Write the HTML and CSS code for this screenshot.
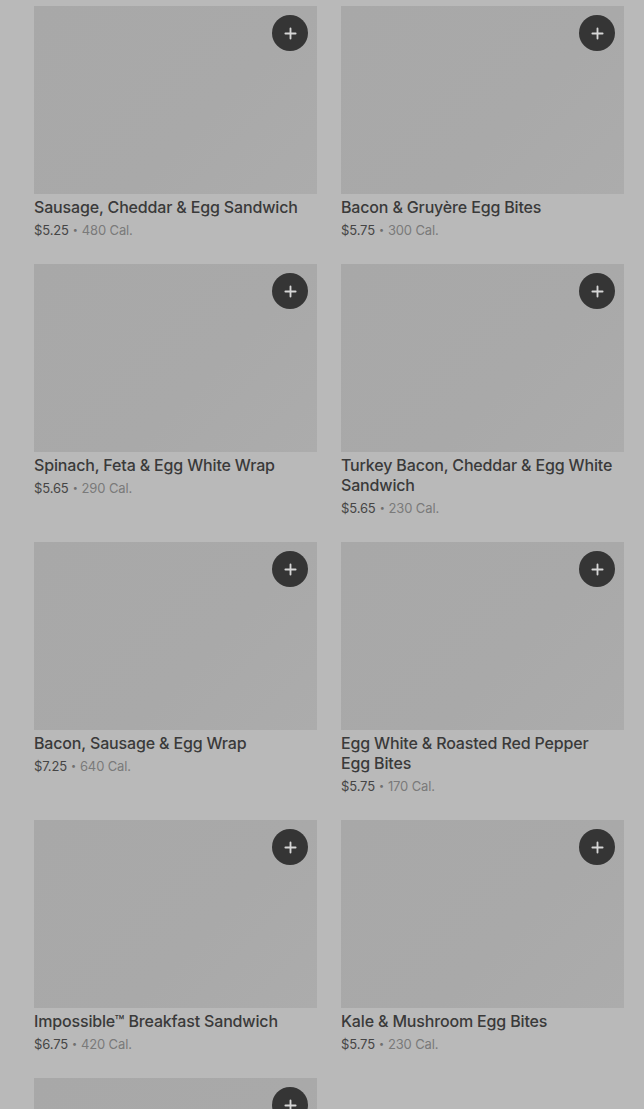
FILE: index.html
```html
<!DOCTYPE html>
<html>
<head>
<meta charset="utf-8">
<link rel="stylesheet" href="styles.css">
</head>
<body>
<div class="grid">
  <div class="card">
    <div class="img"><button class="add"><svg viewBox="0 0 14 14" width="13" height="13"><path d="M7 1.5v11M1.5 7h11" stroke="#d6d6d6" stroke-width="2" stroke-linecap="round"/></svg></button></div>
    <div class="title">Sausage, Cheddar &amp; Egg Sandwich</div>
    <div class="meta"><span class="price">$5.25</span><span class="dot">•</span><span class="cal">480 Cal.</span></div>
  </div>
  <div class="card">
    <div class="img"><button class="add"><svg viewBox="0 0 14 14" width="13" height="13"><path d="M7 1.5v11M1.5 7h11" stroke="#d6d6d6" stroke-width="2" stroke-linecap="round"/></svg></button></div>
    <div class="title">Bacon &amp; Gruyère Egg Bites</div>
    <div class="meta"><span class="price">$5.75</span><span class="dot">•</span><span class="cal">300 Cal.</span></div>
  </div>
  <div class="card">
    <div class="img"><button class="add"><svg viewBox="0 0 14 14" width="13" height="13"><path d="M7 1.5v11M1.5 7h11" stroke="#d6d6d6" stroke-width="2" stroke-linecap="round"/></svg></button></div>
    <div class="title">Spinach, Feta &amp; Egg White Wrap</div>
    <div class="meta"><span class="price">$5.65</span><span class="dot">•</span><span class="cal">290 Cal.</span></div>
  </div>
  <div class="card">
    <div class="img"><button class="add"><svg viewBox="0 0 14 14" width="13" height="13"><path d="M7 1.5v11M1.5 7h11" stroke="#d6d6d6" stroke-width="2" stroke-linecap="round"/></svg></button></div>
    <div class="title">Turkey Bacon, Cheddar &amp; Egg White Sandwich</div>
    <div class="meta"><span class="price">$5.65</span><span class="dot">•</span><span class="cal">230 Cal.</span></div>
  </div>
  <div class="card">
    <div class="img"><button class="add"><svg viewBox="0 0 14 14" width="13" height="13"><path d="M7 1.5v11M1.5 7h11" stroke="#d6d6d6" stroke-width="2" stroke-linecap="round"/></svg></button></div>
    <div class="title">Bacon, Sausage &amp; Egg Wrap</div>
    <div class="meta"><span class="price">$7.25</span><span class="dot">•</span><span class="cal">640 Cal.</span></div>
  </div>
  <div class="card">
    <div class="img"><button class="add"><svg viewBox="0 0 14 14" width="13" height="13"><path d="M7 1.5v11M1.5 7h11" stroke="#d6d6d6" stroke-width="2" stroke-linecap="round"/></svg></button></div>
    <div class="title">Egg White &amp; Roasted Red Pepper Egg Bites</div>
    <div class="meta"><span class="price">$5.75</span><span class="dot">•</span><span class="cal">170 Cal.</span></div>
  </div>
  <div class="card">
    <div class="img"><button class="add"><svg viewBox="0 0 14 14" width="13" height="13"><path d="M7 1.5v11M1.5 7h11" stroke="#d6d6d6" stroke-width="2" stroke-linecap="round"/></svg></button></div>
    <div class="title">Impossible™ Breakfast Sandwich</div>
    <div class="meta"><span class="price">$6.75</span><span class="dot">•</span><span class="cal">420 Cal.</span></div>
  </div>
  <div class="card">
    <div class="img"><button class="add"><svg viewBox="0 0 14 14" width="13" height="13"><path d="M7 1.5v11M1.5 7h11" stroke="#d6d6d6" stroke-width="2" stroke-linecap="round"/></svg></button></div>
    <div class="title">Kale &amp; Mushroom Egg Bites</div>
    <div class="meta"><span class="price">$5.75</span><span class="dot">•</span><span class="cal">230 Cal.</span></div>
  </div>
  <div class="card">
    <div class="img"><button class="add"><svg viewBox="0 0 14 14" width="13" height="13"><path d="M7 1.5v11M1.5 7h11" stroke="#d6d6d6" stroke-width="2" stroke-linecap="round"/></svg></button></div>
  </div>
</div>
</body>
</html>
```
FILE: styles.css
```css
html, body {
  margin: 0;
  padding: 0;
  background: #b9b9b9;
  height: 1109px;
  overflow: hidden;
}
body {
  font-family: Inter, "Noto Sans", sans-serif;
  color: #3b3b3b;
}
.grid {
  display: grid;
  grid-template-columns: 283px 283px;
  column-gap: 24px;
  row-gap: 24px;
  padding: 6px 20px 0 34px;
  align-items: start;
}
.card {
  display: flex;
  flex-direction: column;
}
.img {
  position: relative;
  height: 188px;
  background: linear-gradient(135deg, #a8a8a8 0%, #a9a9a9 60%, #acacac 100%);
}
.add {
  position: absolute;
  top: 9px;
  right: 9px;
  width: 36px;
  height: 36px;
  border-radius: 50%;
  border: none;
  padding: 0;
  background: #353535;
  display: flex;
  align-items: center;
  justify-content: center;
}
.title {
  margin-top: 3px;
  padding-right: 6px;
  font-size: 16px;
  line-height: 20px;
  font-weight: 500;
  letter-spacing: -0.01em;
  color: #3a3a3a;
}
.meta {
  margin-top: 3px;
  font-size: 13px;
  line-height: 20px;
  letter-spacing: -0.01em;
  display: flex;
  align-items: center;
}
.price {
  color: #454545;
}
.dot {
  color: #6f6f6f;
  margin: 0 4px;
  font-size: 9px;
}
.cal {
  color: #7a7a7a;
}
```
